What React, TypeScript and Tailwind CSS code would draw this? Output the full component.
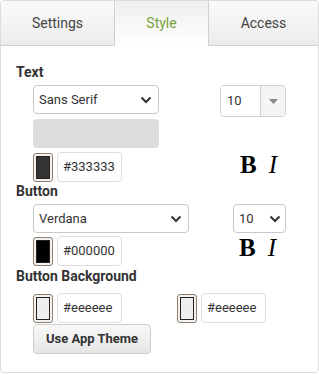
import React from "react";

const Chevron: React.FC = () => (
  <svg width="12" height="8" viewBox="0 0 12 8" className="shrink-0">
    <path d="M1.5 1.5 L6 6 L10.5 1.5" fill="none" stroke="#333" strokeWidth="2" />
  </svg>
);

const Swatch: React.FC<{ color: string }> = ({ color }) => (
  <div className="w-[20px] h-[29px] rounded-[3px] border border-[#8f7d6d] bg-[#f2f2f2] p-[2px] shrink-0">
    <div className="w-full h-full border border-[#222]" style={{ background: color }} />
  </div>
);

const ColorField: React.FC<{ color: string; value: string }> = ({ color, value }) => (
  <div className="flex items-center gap-[4px]">
    <Swatch color={color} />
    <div className="w-[65px] h-[30px] border border-[#ddd] rounded-[4px] bg-white flex items-center pl-[5px] text-[13px] text-[#333]">
      {value}
    </div>
  </div>
);

const BoldItalic: React.FC = () => (
  <div className="flex items-center gap-[12px] font-['Liberation_Serif',serif] text-[25px] leading-[24px] text-black">
    <span className="font-bold">B</span>
    <span className="italic">I</span>
  </div>
);

export default function App() {
  return (
    <div className="w-[319px] h-[373px] border border-[#dcdcdc] rounded-b-[4px] rounded-t-[4px] bg-white overflow-hidden font-['Roboto',sans-serif] text-[#333]">
      <div className="flex h-[45px] text-[14px]">
        <div className="w-[114px] flex items-center justify-center bg-gradient-to-b from-[#fafafa] to-[#ececec] border-b border-r border-[#d0d0d0] text-[#444]">
          Settings
        </div>
        <div className="w-[94px] flex items-center justify-center bg-gradient-to-b from-[#efefef] to-white border-r border-[#d0d0d0] text-[#76a33a]">
          Style
        </div>
        <div className="flex-1 flex items-center justify-center bg-gradient-to-b from-[#fafafa] to-[#ececec] border-b border-[#d0d0d0] text-[#444]">
          Access
        </div>
      </div>

      <div className="pl-[15px] pt-[18px]">
        <div className="text-[14px] font-bold leading-4 text-[#333]">Text</div>
        <div className="flex mt-[5px]">
          <div className="ml-[17px] w-[126px] flex flex-col">
            <div className="h-[29px] border border-[#c8c8c8] rounded-[4px] flex items-center justify-between pl-[5px] pr-[6px] text-[13px]">
              <span>Sans Serif</span>
              <Chevron />
            </div>
            <div className="h-[29px] mt-[5px] rounded-[4px] bg-[#dddddd]" />
            <div className="mt-[4px]">
              <ColorField color="#333333" value="#333333" />
            </div>
          </div>
          <div className="ml-[61px] flex flex-col">
            <div className="w-[66px] h-[32px] border border-[#cfcfcf] rounded-[4px] flex overflow-hidden text-[13px]">
              <div className="w-[40px] flex items-center pl-[6px] bg-white border-r border-[#cfcfcf]">10</div>
              <div className="flex-1 flex items-center justify-center bg-[#f5f5f5]">
                <svg width="9" height="5" viewBox="0 0 9 5">
                  <path d="M0 0 H9 L4.5 5 Z" fill="#888" />
                </svg>
              </div>
            </div>
            <div className="mt-[36px] ml-[20px]">
              <BoldItalic />
            </div>
          </div>
        </div>

        <div className="mt-[1px] text-[14px] font-bold leading-4 text-[#333]">Button</div>
        <div className="flex mt-[5px]">
          <div className="ml-[17px] w-[156px] flex flex-col">
            <div className="h-[29px] border border-[#c8c8c8] rounded-[4px] flex items-center justify-between pl-[5px] pr-[6px] text-[13px]">
              <span>Verdana</span>
              <Chevron />
            </div>
            <div className="mt-[3px]">
              <ColorField color="#000000" value="#000000" />
            </div>
          </div>
          <div className="ml-[44px] flex flex-col">
            <div className="w-[53px] h-[29px] border border-[#c8c8c8] rounded-[4px] flex items-center justify-between pl-[5px] pr-[4px] text-[13px]">
              <span>10</span>
              <Chevron />
            </div>
            <div className="mt-[3px] ml-[6px]">
              <BoldItalic />
            </div>
          </div>
        </div>

        <div className="mt-[2px] text-[14px] font-bold leading-4 text-[#333]">Button Background</div>
        <div className="flex mt-[9px] ml-[17px] gap-[55px]">
          <ColorField color="#eeeeee" value="#eeeeee" />
          <ColorField color="#eeeeee" value="#eeeeee" />
        </div>
        <button className="mt-[1px] ml-[17px] w-[118px] h-[30px] border border-[#cccccc] rounded-[4px] bg-gradient-to-b from-[#f8f8f8] to-[#e6e6e6] text-[13px] font-bold text-[#333]">
          Use App Theme
        </button>
      </div>
    </div>
  );
}
